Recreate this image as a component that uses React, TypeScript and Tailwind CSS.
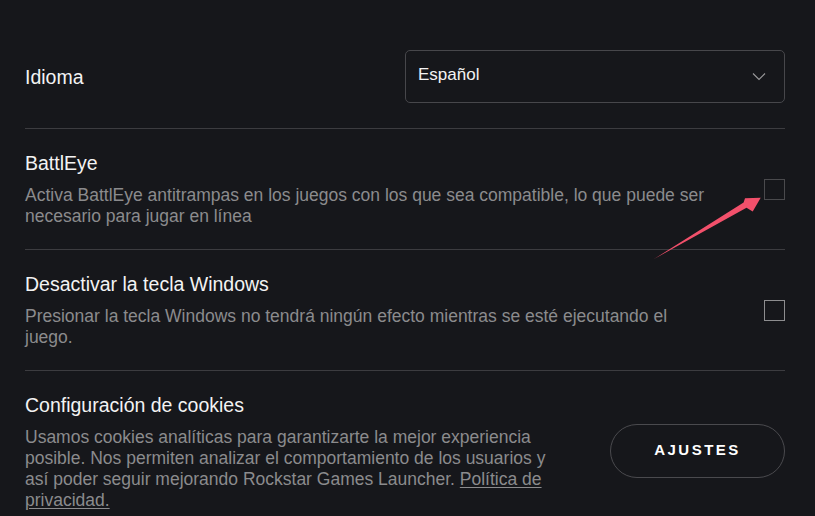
import { useState } from 'react';

const Checkbox = ({ dim }: { dim?: boolean }) => (
  <div
    className={`w-[21px] h-[21px] shrink-0 border ${dim ? 'border-[#4a4a4d]' : 'border-[#8d8d8f]'}`}
  />
);

const Chevron = () => (
  <svg width="14" height="9" viewBox="0 0 14 9" fill="none" className="text-[#9a9a9c]">
    <path d="M1 1.5L7 7.5L13 1.5" stroke="currentColor" strokeWidth="1.1" />
  </svg>
);

export default function App() {
  const [lang] = useState('Español');

  return (
    <div className="relative h-[516px] w-[815px] overflow-hidden bg-[#16171b] font-['Liberation_Sans',Arial,sans-serif] text-[#f3f3f3]">
      <div className="pl-[25px] pr-[30px]">
        {/* Idioma */}
        <div className="flex items-center justify-between border-b border-[#3c3c40] pt-[50px] pb-[25px]">
          <span className="text-[19.5px] leading-[24px]">Idioma</span>
          <div className="flex h-[53px] w-[380px] items-center justify-between rounded-[5px] border border-[#47474b] pl-[12px] pr-[18px]">
            <span className="text-[17px] leading-[22px] -mt-[3px]">{lang}</span>
            <Chevron />
          </div>
        </div>

        {/* BattlEye */}
        <div className="flex items-center justify-between border-b border-[#3c3c40] pt-[23px] pb-[22px]">
          <div className="w-[686px]">
            <div className="text-[19.5px] leading-[22px]">BattlEye</div>
            <p className="mt-[11px] text-[17.5px] leading-[21px] text-[#8b8b8d]">
              Activa BattlEye antitrampas en los juegos con los que sea compatible, lo que puede ser necesario para jugar en línea
            </p>
          </div>
          <Checkbox dim />
        </div>

        {/* Tecla Windows */}
        <div className="flex items-center justify-between border-b border-[#3c3c40] pt-[23px] pb-[22px]">
          <div className="w-[686px]">
            <div className="text-[19.5px] leading-[22px]">Desactivar la tecla Windows</div>
            <p className="mt-[11px] text-[17.5px] leading-[21px] text-[#8b8b8d]">
              Presionar la tecla Windows no tendrá ningún efecto mientras se esté ejecutando el juego.
            </p>
          </div>
          <Checkbox />
        </div>

        {/* Cookies */}
        <div className="flex items-center justify-between pt-[23px] pb-[23px]">
          <div className="w-[540px]">
            <div className="text-[19.5px] leading-[22px]">Configuración de cookies</div>
            <p className="mt-[11px] text-[17.5px] leading-[21px] text-[#8b8b8d]">
              Usamos cookies analíticas para garantizarte la mejor experiencia posible. Nos permiten analizar el comportamiento de los usuarios y así poder seguir mejorando Rockstar Games Launcher.{' '}
              <a className="underline underline-offset-2">Política de privacidad.</a>
            </p>
          </div>
          <button className="mb-[4px] flex h-[54px] w-[175px] items-center justify-center rounded-full border border-[#4a4a4e] text-[15px] font-bold tracking-[2.5px] text-white">
            AJUSTES
          </button>
        </div>
      </div>

      {/* annotation arrow */}
      <svg className="pointer-events-none absolute left-0 top-0" width="815" height="516">
        <polygon
          points="654,259 746.5,207.8 752.7,211.5 760.7,197.8 745,198.3 743.6,202.6"
          fill="#f2506b"
        />
      </svg>
    </div>
  );
}
